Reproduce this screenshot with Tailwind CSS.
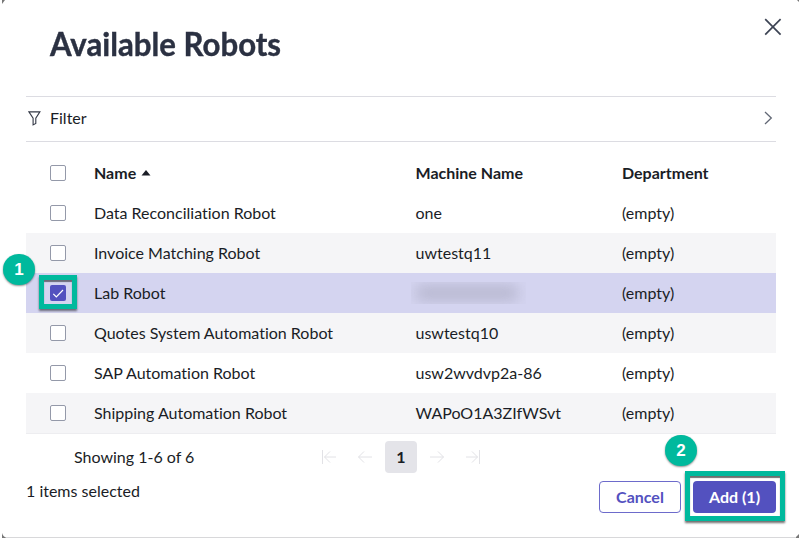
<!DOCTYPE html>
<html lang="en">
<head>
<meta charset="utf-8">
<title>Available Robots</title>
<script src="https://cdn.jsdelivr.net/npm/@tailwindcss/browser@4"></script>
</head>
<body class="relative h-[538px] w-[799px] overflow-hidden bg-white font-['Lato',sans-serif] text-[16px] leading-6 text-[#1a1d26] [font-variant-ligatures:none]">
<svg class="absolute inset-0" width="799" height="538" viewBox="0 0 799 538"><path d="M2 0h3l-3 4zM797 0h2v2zM2 538v-5q1 4 5 5zM799 534v4h-4z" fill="#777"/><path d="M6 537.5H796" stroke="#d8d8da"/></svg>
<main class="relative flex h-full flex-col pr-[23px] pl-[26px]">
  <header class="flex h-[96px] shrink-0 items-start justify-between pl-[24px]">
    <h1 class="pt-[24px] text-[32px] leading-10 font-bold whitespace-nowrap text-[#2b3142]"><span class="inline-block origin-left scale-x-[0.975] scale-y-[1.04] [-webkit-text-stroke:0.4px_#2b3142]">Available Robots</span></h1>
    <svg class="mt-[18px] -mr-[6px]" width="18" height="18" viewBox="0 0 18 18" fill="none" stroke="#3d4454" stroke-width="1.7"><path d="M1.2 1.2l15.4 15.4M16.6 1.2L1.2 16.6"/></svg>
  </header>
  <section class="flex h-[46px] shrink-0 items-center border-y border-[#dcdce2] pr-[3px] pb-[2px] pl-[2px]">
    <svg width="13" height="15" viewBox="0 0 13 15" fill="none" stroke="#333846" stroke-width="1.1"><path d="M.9.9h11L7.8 7.2v5.3l-2.7 1.4V7.2z"/></svg>
    <span class="ml-[9px]">Filter</span>
    <svg class="ml-auto" width="9" height="14" viewBox="0 0 9 14" fill="none" stroke="#626875" stroke-width="1.3"><path d="M1 1l6.3 6L1 13"/></svg>
  </section>
  <section class="flex h-[292px] shrink-0 flex-col border-b border-[#ededf0] pt-[11.4px]">
    <div class="grid h-10 shrink-0 grid-cols-[68px_321.5px_206.5px_1fr] items-center font-bold">
      <span class="ml-[24px] size-4 rounded-[2px] border border-[#9499a9] bg-white"></span>
      <span class="flex items-center">Name<svg class="ml-[5px]" width="10" height="6" viewBox="0 0 10 6" fill="#1a1d26"><path d="M5 0l4.5 5.4h-9z"/></svg></span><span>Machine Name</span><span>Department</span>
    </div>
    <div class="grid h-10 shrink-0 grid-cols-[68px_321.5px_206.5px_1fr] items-center">
      <span class="ml-[24px] size-4 rounded-[2px] border border-[#9499a9] bg-white"></span>
      <span>Data Reconciliation Robot</span><span>one</span><span>(empty)</span>
    </div>
    <div class="grid h-10 shrink-0 grid-cols-[68px_321.5px_206.5px_1fr] items-center bg-[#f5f5f7]">
      <span class="ml-[24px] size-4 rounded-[2px] border border-[#9499a9] bg-white"></span>
      <span>Invoice Matching Robot</span><span>uwtestq11</span><span>(empty)</span>
    </div>
    <div class="grid h-10 shrink-0 grid-cols-[68px_321.5px_206.5px_1fr] items-center bg-[#d4d4f0]">
      <span class="ml-[24px] size-4 rounded-[2px] bg-[#5351bf]"><svg width="16" height="16" viewBox="0 0 16 16" fill="none" stroke="#fff" stroke-width="1.2"><path d="M3.3 8.8l3 3L13 5"/></svg></span>
      <span>Lab Robot</span><span class="-ml-[5px] h-[22px] w-[115px] overflow-hidden"><span class="mt-[3px] ml-[5px] block h-[16px] w-[102px] rounded bg-[#b8b8d0] blur-[7px]"></span></span><span>(empty)</span>
    </div>
    <div class="grid h-10 shrink-0 grid-cols-[68px_321.5px_206.5px_1fr] items-center bg-[#f5f5f7]">
      <span class="ml-[24px] size-4 rounded-[2px] border border-[#9499a9] bg-white"></span>
      <span>Quotes System Automation Robot</span><span>uswtestq10</span><span>(empty)</span>
    </div>
    <div class="grid h-10 shrink-0 grid-cols-[68px_321.5px_206.5px_1fr] items-center">
      <span class="ml-[24px] size-4 rounded-[2px] border border-[#9499a9] bg-white"></span>
      <span>SAP Automation Robot</span><span>usw2wvdvp2a-86</span><span>(empty)</span>
    </div>
    <div class="grid h-10 shrink-0 grid-cols-[68px_321.5px_206.5px_1fr] items-center bg-[#f5f5f7]">
      <span class="ml-[24px] size-4 rounded-[2px] border border-[#9499a9] bg-white"></span>
      <span>Shipping Automation Robot</span><span>WAPoO1A3ZIfWSvt</span><span>(empty)</span>
    </div>
  </section>
  <nav class="flex h-[47px] shrink-0 items-center pb-[1px] pl-[48px]">
    <span class="w-[247px]">Showing 1-6 of 6</span>
    <svg width="15" height="14" viewBox="0 0 15 14" fill="none" stroke="#e2e2e6" stroke-width="1"><path d="M1.5 0v14M15 7H3.5M9 1.5L3.5 7 9 12.5"/></svg>
    <svg class="ml-[21px]" width="15" height="14" viewBox="0 0 15 14" fill="none" stroke="#e2e2e6" stroke-width="1"><path d="M15 7H1.5M7 1.5L1.5 7 7 12.5"/></svg>
    <span class="ml-[13px] flex size-8 items-center justify-center rounded bg-[#e4e4e9] font-bold">1</span>
    <svg class="ml-[13px]" width="15" height="14" viewBox="0 0 15 14" fill="none" stroke="#e2e2e6" stroke-width="1"><path d="M0 7h13.5M8 1.5L13.5 7 8 12.5"/></svg>
    <svg class="ml-[21px]" width="15" height="14" viewBox="0 0 15 14" fill="none" stroke="#e2e2e6" stroke-width="1"><path d="M13.5 0v14M0 7h11.5M6 1.5L11.5 7 6 12.5"/></svg>
  </nav>
  <footer class="flex justify-between">
    <span class="-mt-[2px]">1 items selected</span>
    <div class="flex gap-[12px] font-bold">
      <button class="h-[32px] w-[82px] rounded border border-[#6d6bcb] bg-white text-[#5351bf]">Cancel</button>
      <button class="h-[32px] w-[83px] rounded bg-[#5351bf] text-white">Add (1)</button>
    </div>
  </footer>
</main>
<div class="absolute top-[275px] left-[39px] h-[34px] w-[38px] border-[5px] border-[#00b99d] shadow-[0_2px_2px_#00000080,inset_0_2px_1px_#00000080]"></div>
<div class="absolute top-[254px] left-[3px] flex h-[31px] w-[32px] items-center justify-center rounded-full bg-[#00b99d] font-['Liberation_Sans',sans-serif] text-[17px] font-bold text-white shadow-[0_1px_2px_#00000070]">1</div>
<div class="absolute top-[471px] left-[685px] h-[50px] w-[100px] border-[5px] border-[#00b99d] shadow-[0_2px_2px_#00000090,inset_0_2px_1px_#00000090]"></div>
<div class="absolute top-[435px] left-[665px] flex h-[31px] w-[32px] items-center justify-center rounded-full bg-[#00b99d] font-['Liberation_Sans',sans-serif] text-[17px] font-bold text-white shadow-[0_1px_2px_#00000070]">2</div>
</body>
</html>
